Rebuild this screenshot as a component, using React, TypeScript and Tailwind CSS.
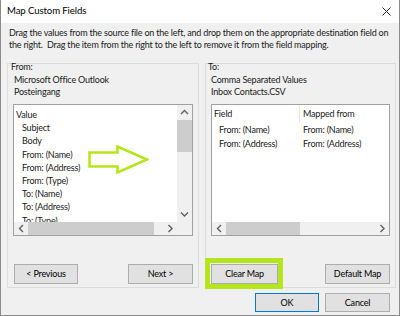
import React from 'react'

const font = { fontFamily: '"Segoe UI", Lato, "Noto Sans", sans-serif' }

function Chevron({ dir }: { dir: 'up' | 'down' | 'left' | 'right' }) {
  const pts = {
    up: '1,5 4.5,1.5 8,5',
    down: '1,1.5 4.5,5 8,1.5',
    left: '5,1 1.5,4.5 5,8',
    right: '1.5,1 5,4.5 1.5,8',
  }[dir]
  const w = dir === 'up' || dir === 'down' ? 9 : 7
  const h = dir === 'up' || dir === 'down' ? 7 : 9
  return (
    <svg width={w} height={h} viewBox={`0 0 ${w} ${h}`}>
      <polyline points={pts} fill="none" stroke="#606060" strokeWidth="1.4" />
    </svg>
  )
}

function Button({ label, width, focused }: { label: string; width: string; focused?: boolean }) {
  return (
    <div
      className={`${width} h-full flex items-center justify-center bg-[#e1e1e1] border text-black ${
        focused ? 'border-[#0078d7]' : 'border-[#adadad]'
      }`}
    >
      {label}
    </div>
  )
}

const sourceFields = [
  'Subject',
  'Body',
  'From: (Name)',
  'From: (Address)',
  'From: (Type)',
  'To: (Name)',
  'To: (Address)',
  'To: (Type)',
]

const mapping = [
  { field: 'From: (Name)', from: 'From: (Name)' },
  { field: 'From: (Address)', from: 'From: (Address)' },
]

function GreenArrow() {
  return (
    <svg className="absolute left-[74px] top-[40px]" width="61" height="29" viewBox="0 0 61 29">
      <polygon
        points="1.5,7.5 29.5,7.5 29.5,1.5 59,14.5 29.5,27.5 29.5,21.5 1.5,21.5"
        fill="none"
        stroke="#b5e61d"
        strokeWidth="2.6"
      />
    </svg>
  )
}

export default function App() {
  return (
    <div
      className="w-[400px] h-[316px] flex flex-col bg-[#f0f0f0] border-x border-b border-[#8a8a8a] text-[#1a1a1a] text-[9px] tracking-[-0.2px] overflow-hidden"
      style={font}
    >
      {/* Title bar */}
      <div className="h-[23px] shrink-0 bg-white flex items-center justify-between pl-[6px] pr-[8px]">
        <span className="text-[9.6px] tracking-[-0.1px] text-black">Map Custom Fields</span>
        <svg width="9" height="9" viewBox="0 0 9 9">
          <path d="M0.5 0.5 L8.5 8.5 M8.5 0.5 L0.5 8.5" stroke="#222" strokeWidth="1" />
        </svg>
      </div>

      {/* Instructions */}
      <div className="pl-[8px] pt-[4px] leading-[12px] whitespace-nowrap">
        Drag the values from the source file on the left, and drop them on the appropriate destination field on
        <br />
        the right.{'\u00a0'} Drag the item from the right to the left to remove it from the field mapping.
      </div>

      {/* Group boxes */}
      <div className="mt-[12px] flex gap-[6px] pl-[6px]">
        {/* From */}
        <div className="w-[192px] h-[225px] border border-[#dcdcdc] flex flex-col">
          <div className="-mt-[3px] ml-[3px] h-[12px] leading-[12px]">From:</div>
          <div className="mt-[1px] ml-[6px] leading-[12px]">Microsoft Office Outlook</div>
          <div className="ml-[6px] leading-[12px]">Posteingang</div>

          <div className="relative mt-[6px] ml-[5px] w-[180px] h-[132px] border border-[#a0a0a0] bg-white flex flex-col">
            <div className="flex flex-1 min-h-0">
              <div className="flex-1 overflow-hidden pt-[3px]">
                <div className="pl-[2px] h-[13.2px] leading-[13.2px]">Value</div>
                {sourceFields.map((f) => (
                  <div key={f} className="pl-[8px] h-[13.2px] leading-[13.2px]">
                    {f}
                  </div>
                ))}
              </div>
              <div className="w-[15px] bg-[#f0f0f0] flex flex-col items-center">
                <div className="h-[15px] flex items-center justify-center">
                  <Chevron dir="up" />
                </div>
                <div className="w-[15px] h-[32px] bg-[#cdcdcd]" />
                <div className="flex-1" />
                <div className="h-[15px] flex items-center justify-center">
                  <Chevron dir="down" />
                </div>
              </div>
            </div>
            <div className="h-[13px] flex bg-[#f0f0f0]">
              <div className="w-[14px] flex items-center justify-center">
                <Chevron dir="left" />
              </div>
              <div className="w-[126px] bg-[#cdcdcd]" />
              <div className="flex-1" />
              <div className="w-[14px] flex items-center justify-center">
                <Chevron dir="right" />
              </div>
              <div className="w-[15px] bg-[#f0f0f0]" />
            </div>
            <GreenArrow />
          </div>

          <div className="mt-auto mb-[3px] h-[20px] flex justify-between ml-[6px] mr-[5px]">
            <Button label="< Previous" width="w-[64px]" />
            <Button label="Next >" width="w-[65px]" />
          </div>
        </div>

        {/* To */}
        <div className="w-[191px] h-[225px] border border-[#dcdcdc] flex flex-col">
          <div className="-mt-[3px] ml-[2px] h-[12px] leading-[12px]">To:</div>
          <div className="mt-[1px] ml-[5px] leading-[12px]">Comma Separated Values</div>
          <div className="ml-[5px] leading-[12px]">Inbox Contacts.CSV</div>

          <div className="mt-[6px] ml-[5px] w-[179px] h-[132px] border border-[#a0a0a0] bg-white flex flex-col">
            <div className="flex-1 min-h-0 overflow-hidden">
              <div className="h-[18px] flex items-center">
                <div className="w-[88px] h-full flex items-center pl-[2px] border-r border-[#e5e5e5]">Field</div>
                <div className="pl-[3px]">Mapped from</div>
              </div>
              {mapping.map((m) => (
                <div key={m.field} className="flex h-[14px] items-center">
                  <div className="w-[89px] pl-[7px]">{m.field}</div>
                  <div className="pl-[2px]">{m.from}</div>
                </div>
              ))}
            </div>
            <div className="h-[13px] flex bg-[#f0f0f0]">
              <div className="w-[14px] flex items-center justify-center">
                <Chevron dir="left" />
              </div>
              <div className="w-[74px] bg-[#cdcdcd]" />
              <div className="flex-1" />
              <div className="w-[14px] flex items-center justify-center">
                <Chevron dir="right" />
              </div>
            </div>
          </div>

          <div className="mt-auto mb-[3px] h-[20px] flex justify-between ml-[5px] mr-[5px]">
            <div className="relative h-full">
              <Button label="Clear Map" width="w-[67px]" />
              <span className="absolute -left-[6px] -top-[6px] -right-[5px] -bottom-[5px] border-[5px] border-[#b5e61d]" />
            </div>
            <Button label="Default Map" width="w-[65px]" />
          </div>
        </div>
      </div>

      {/* OK / Cancel */}
      <div className="mt-[5px] h-[19px] flex justify-end gap-[6px] pr-[9px]">
        <Button label="OK" width="w-[64px]" focused />
        <Button label="Cancel" width="w-[65px]" />
      </div>
    </div>
  )
}
